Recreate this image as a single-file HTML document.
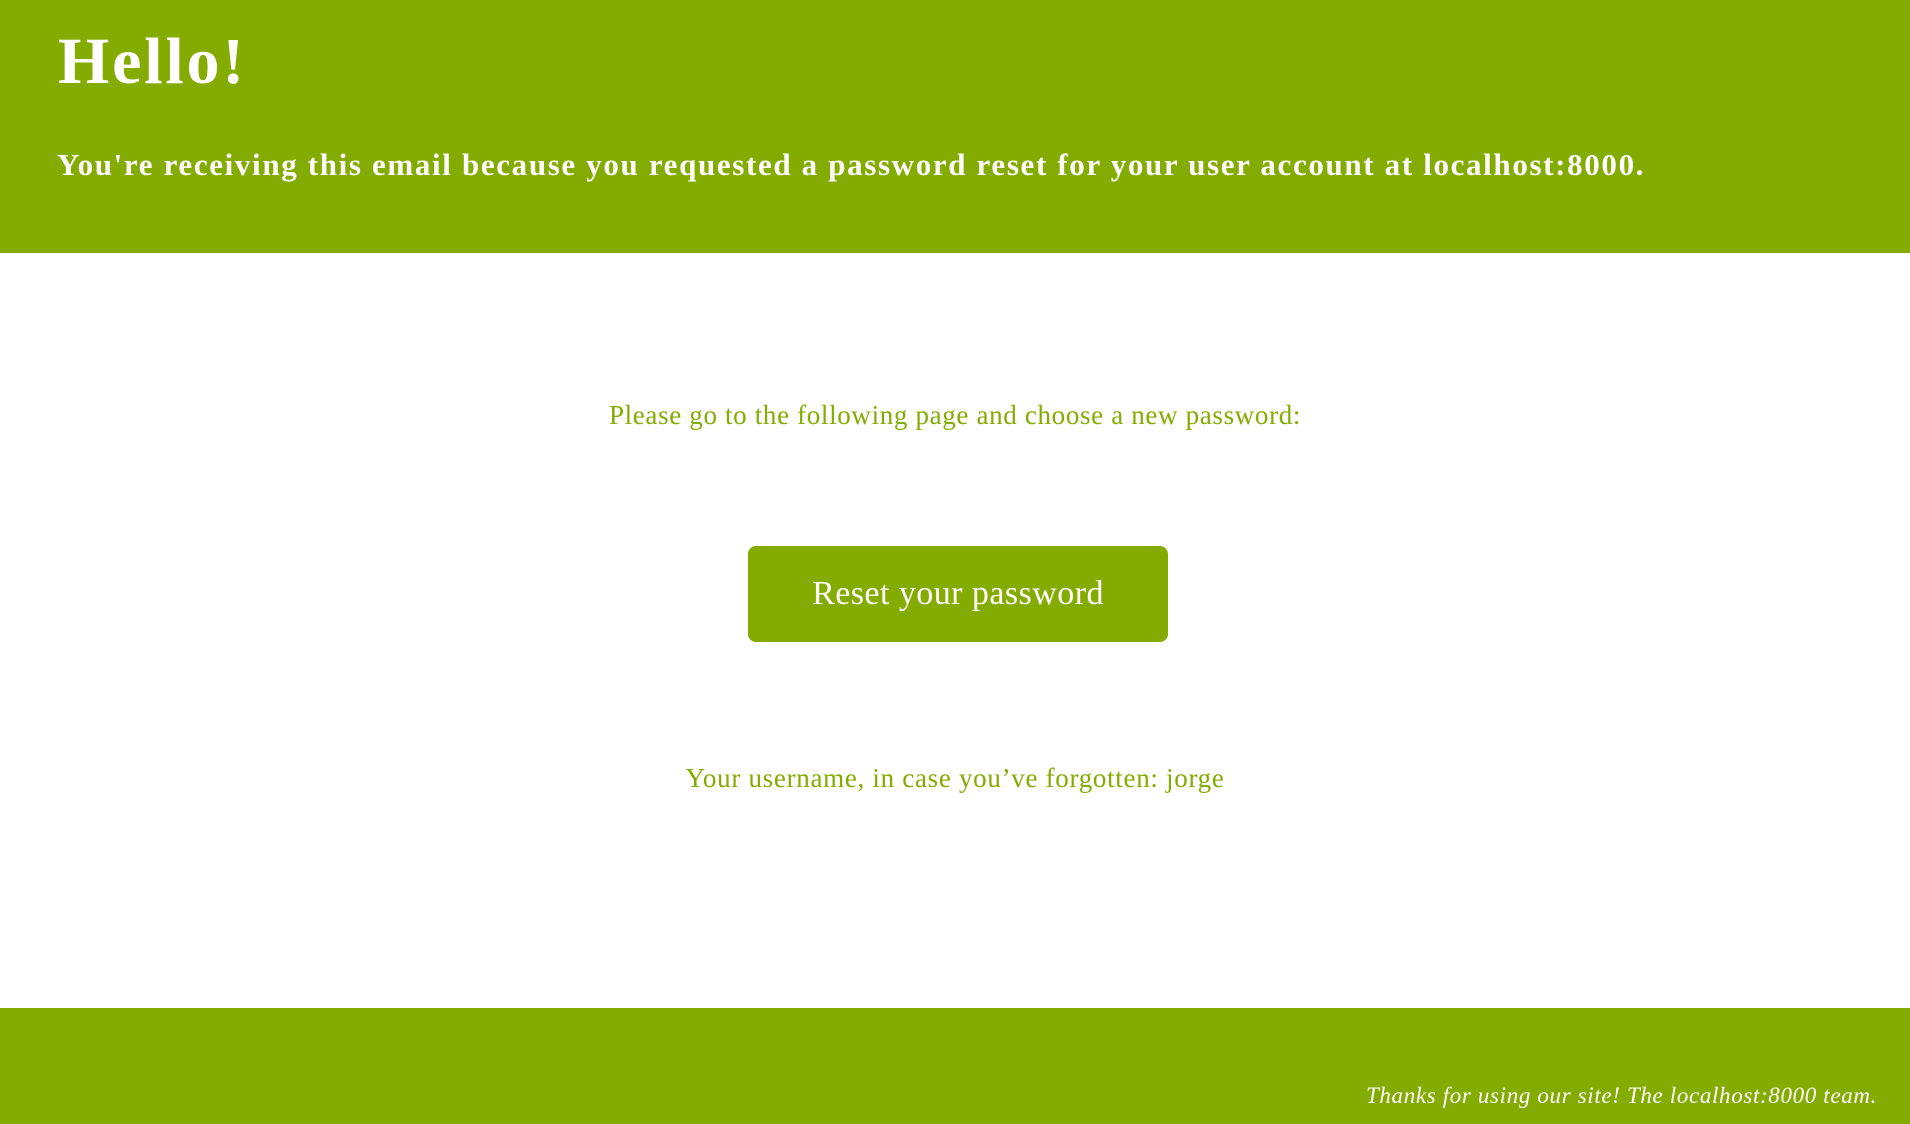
<!DOCTYPE html>
<html><head><meta charset="utf-8"><style>
html,body{margin:0;padding:0;width:1910px;height:1124px;overflow:hidden;background:#fff;font-family:"Liberation Serif",serif;}
.hd{position:absolute;left:0;top:0;width:1910px;height:253px;background:#84ab00;color:#fff;}
.hd h1{position:absolute;left:58px;top:22px;margin:0;font-size:66px;font-weight:bold;line-height:80px;letter-spacing:2.8px;}
.hd p{position:absolute;left:57px;top:145px;margin:0;font-size:31px;font-weight:bold;line-height:40px;white-space:nowrap;letter-spacing:1.65px;}
.t{position:absolute;left:0;width:1910px;text-align:center;color:#84ab00;font-size:27px;line-height:34px;}
.btn{position:absolute;left:748px;top:546px;width:420px;height:96px;background:#84ab00;border-radius:8px;color:#fff;font-size:34px;line-height:96px;text-align:center;letter-spacing:0.45px;}
.ft{position:absolute;left:0;top:1008px;width:1910px;height:116px;background:#84ab00;}
.ft p{position:absolute;right:33px;top:74px;margin:0;color:#fff;font-style:italic;font-size:23px;line-height:28px;white-space:nowrap;letter-spacing:0.65px;}
</style></head><body>
<div class="hd"><h1>Hello!</h1><p>You're receiving this email because you requested a password reset for your user account at localhost:8000.</p></div>
<div class="t" style="top:398px;letter-spacing:0.66px">Please go to the following page and choose a new password:</div>
<div class="btn">Reset your password</div>
<div class="t" style="top:761px;letter-spacing:0.7px">Your username, in case you’ve forgotten: jorge</div>
<div class="ft"><p>Thanks for using our site! The localhost:8000 team.</p></div>
</body></html>
